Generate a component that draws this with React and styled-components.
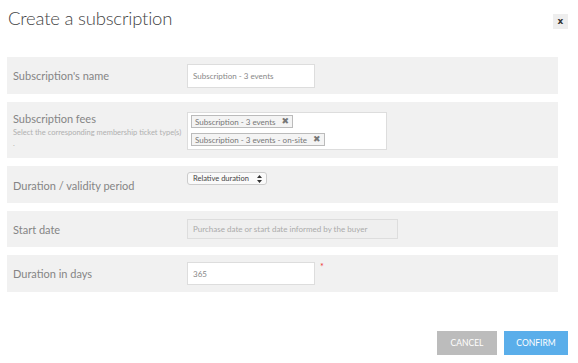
import React from "react";
import styled, { createGlobalStyle } from "styled-components";

const Global = createGlobalStyle`
  body {
    margin: 0;
    background: #fff;
    font-family: Lato, "Open Sans", sans-serif;
    color: #555;
  }
`;

const Modal = styled.div`
  width: 578px;
  height: 363px;
  position: relative;
  box-sizing: border-box;
`;

const Header = styled.div`
  display: flex;
  justify-content: space-between;
  align-items: flex-start;
  padding: 6px 10px 0 8px;
  height: 50px;
  box-sizing: border-box;
`;

const Title = styled.h1`
  margin: 0;
  font-size: 18.5px;
  font-weight: 300;
  color: #444;
  letter-spacing: -0.2px;
  margin-top: 1px;
`;

const CloseButton = styled.button`
  width: 15px;
  height: 15px;
  margin-top: 8px;
  border: none;
  background: #eee;
  font-size: 9px;
  font-weight: bold;
  color: #333;
  padding: 0;
  line-height: 15px;
  font-family: "DejaVu Sans", sans-serif;
`;

const Rows = styled.div`
  display: flex;
  flex-direction: column;
  gap: 8px;
  margin: 7px 20px 0 7px;
`;

const Row = styled.div`
  display: flex;
  align-items: ${(p) => (p.$top ? "flex-start" : "center")};
  background: #f1f1f1;
  min-height: ${(p) => p.$h}px;
  box-sizing: border-box;
  padding: ${(p) => (p.$top ? "10px 0 0" : "0")};
`;

const LabelCol = styled.div`
  width: 180px;
  padding-left: 6px;
  box-sizing: border-box;
`;

const Label = styled.div`
  font-size: 11px;
  color: #858585;
  margin-top: ${(p) => p.$mt || 0}px;
`;

const Hint = styled.div`
  font-size: 7.5px;
  color: #b0b0b0;
  line-height: 11px;
  margin-top: 2px;
`;

const TextInput = styled.div`
  width: ${(p) => p.$w}px;
  height: ${(p) => p.$ht}px;
  box-sizing: border-box;
  border: 1px solid #ddd;
  background: ${(p) => (p.$disabled ? "#efefef" : "#fff")};
  font-size: 8px;
  color: ${(p) => (p.$disabled ? "#aaa" : "#888")};
  display: flex;
  align-items: center;
  padding-left: 5px;
`;

const TagBox = styled.div`
  width: 200px;
  box-sizing: border-box;
  border: 1px solid #ddd;
  background: #fff;
  padding: 2px 3px 3px;
  display: flex;
  flex-direction: column;
  align-items: flex-start;
  gap: 5px;
`;

const Tag = styled.div`
  display: flex;
  align-items: center;
  gap: 6px;
  border: 1px solid #bbb;
  background: #f4f4f4;
  height: 13px;
  box-sizing: border-box;
  padding: 0 3px;
  font-size: 8px;
  color: #777;
`;

const TagX = styled.span`
  font-size: 9px;
  font-weight: bold;
  color: #777;
  font-family: "DejaVu Sans", sans-serif;
  line-height: 1;
`;

const Select = styled.div`
  width: 80px;
  height: 13px;
  box-sizing: border-box;
  border: 1px solid #ccc;
  border-radius: 3px;
  background: #fafafa;
  display: flex;
  align-items: center;
  justify-content: space-between;
  padding: 0 4px 0 5px;
  font-size: 7.5px;
  color: #444;
  margin-top: -12px;
`;

const Field = styled.div`
  display: flex;
  align-items: flex-start;
  gap: 5px;
`;

const Required = styled.span`
  color: #e33;
  font-size: 9px;
  line-height: 1;
`;

const Footer = styled.div`
  position: absolute;
  right: 10px;
  bottom: 8px;
  display: flex;
  gap: 7px;
`;

const Button = styled.button`
  width: ${(p) => p.$w}px;
  height: 24px;
  border: none;
  background: ${(p) => (p.$primary ? "#5aaeea" : "#bcbcbc")};
  color: #fff;
  font-family: Lato, sans-serif;
  font-size: 8.5px;
  text-transform: uppercase;
`;

const Arrows = () => (
  <svg width="5" height="8" viewBox="0 0 5 8">
    <path d="M2.5 0 L5 3 H0 Z M2.5 8 L5 5 H0 Z" fill="#333" />
  </svg>
);

export default function App() {
  return (
    <Modal>
      <Global />
      <Header>
        <Title>Create a subscription</Title>
        <CloseButton>x</CloseButton>
      </Header>
      <Rows>
        <Row $h={37}>
          <LabelCol>
            <Label>Subscription's name</Label>
          </LabelCol>
          <TextInput $w={128} $ht={24}>Subscription - 3 events</TextInput>
        </Row>
        <Row $h={56} $top>
          <LabelCol>
            <Label>Subscription fees</Label>
            <Hint>
              Select the corresponding membership ticket type(s)
              <br />.
            </Hint>
          </LabelCol>
          <TagBox>
            <Tag>
              Subscription - 3 events <TagX>✖</TagX>
            </Tag>
            <Tag>
              Subscription - 3 events - on-site <TagX>✖</TagX>
            </Tag>
          </TagBox>
        </Row>
        <Row $h={37}>
          <LabelCol>
            <Label $mt={2}>Duration / validity period</Label>
          </LabelCol>
          <Select>
            Relative duration <Arrows />
          </Select>
        </Row>
        <Row $h={36}>
          <LabelCol>
            <Label>Start date</Label>
          </LabelCol>
          <TextInput $w={211} $ht={20} $disabled>
            Purchase date or start date informed by the buyer
          </TextInput>
        </Row>
        <Row $h={37}>
          <LabelCol>
            <Label>Duration in days</Label>
          </LabelCol>
          <Field>
            <TextInput $w={128} $ht={23}>365</TextInput>
            <Required>*</Required>
          </Field>
        </Row>
      </Rows>
      <Footer>
        <Button $w={60}>Cancel</Button>
        <Button $w={64} $primary>Confirm</Button>
      </Footer>
    </Modal>
  );
}
